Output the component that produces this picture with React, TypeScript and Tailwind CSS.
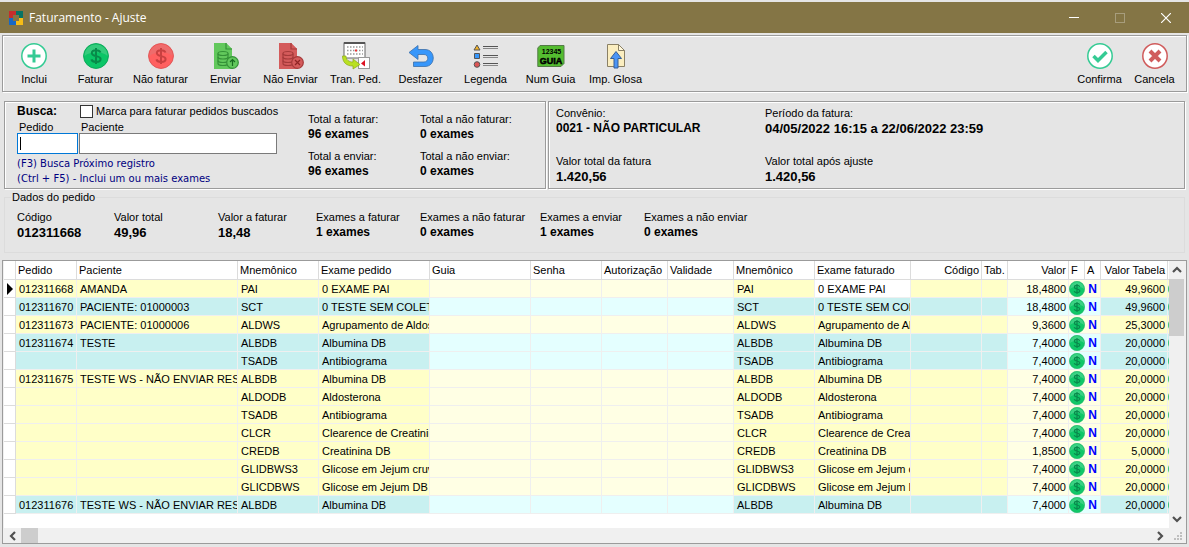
import type { ReactNode } from 'react'
import { clsx } from 'clsx'

function Coin({ light, fill, edge, sign, className }: { light: string; fill: string; edge: string; sign: string; className: string }) {
  return (
    <svg viewBox="0 0 26 26" className={className} aria-hidden="true">
      <circle cx="13" cy="13" r="12.4" fill={fill} stroke={edge} />
      <path d="M1.500 13a11.500 11.500 0 0 1 23 0C19 8 8 8 1.500 13z" fill={light} />
      <path d="M13 5v16M17.500 9.500c-.6-1.600-2.200-2.300-4.400-2.300-2.700 0-4.300 1-4.300 2.800 0 4.200 8.800 2.100 8.800 6 0 1.900-1.800 2.900-4.500 2.900-2.500 0-4.200-.8-4.700-2.500" fill="none" stroke={sign} strokeWidth="2" />
    </svg>
  )
}

function RingIcon({ color, children }: { color: string; children: ReactNode }) {
  return (
    <svg viewBox="0 0 26 26" className="size-[26px]" fill="none" stroke={color}>
      <circle cx="13" cy="13" r="12.2" fill="#fff" strokeWidth="1.5" />
      {children}
    </svg>
  )
}

function FileIcon({ fill, edge, children }: { fill: string; edge: string; children: ReactNode }) {
  return (
    <svg viewBox="0 0 26 28" className="h-7 w-[26px]" fill={fill} stroke={edge} strokeWidth="1.2">
      <path d="M1 1h12l6 6v20H1z" stroke="none" />
      <path d="M13 1v6h6" />
      <path d="M5 11.500v10c0 1 2 2 5 2s5-1 5-2v-10" />
      <ellipse cx="10" cy="11.5" rx="5" ry="2" />
      <path d="M5 15c0 1 2 2 5 2s5-1 5-2M5 18.500c0 1 2 2 5 2s5-1 5-2" fill="none" />
      <circle cx="19.5" cy="20.5" r="5.8" />
      {children}
    </svg>
  )
}

const actions = [
  {
    label: 'Faturar',
    icon: <Coin light="#35cb7c" fill="#0bc566" edge="#0aa657" sign="#078a49" className="size-[26px]" />
  },
  {
    label: 'Não faturar',
    icon: <Coin light="#ee6c6c" fill="#ff6060" edge="#df5555" sign="#c94040" className="size-[26px]" />
  },
  {
    label: 'Enviar',
    icon: (
      <FileIcon fill="#62c85c" edge="#349137">
        <path d="M19.500 24v-6M17 20l2.500-2.500L22 20" fill="none" stroke="#176b20" />
      </FileIcon>
    )
  },
  {
    label: 'Não Enviar',
    icon: (
      <FileIcon fill="#d45b5b" edge="#a53a3a">
        <path d="m17 18 5 5m0-5-5 5" stroke="#8f2424" />
      </FileIcon>
    )
  },
  {
    label: 'Tran. Ped.',
    icon: (
      <svg viewBox="0 0 30 28" className="h-7 w-[30px]" fill="none">
        <rect x="3" y="1" width="21" height="15" fill="#fff" stroke="#666" />
        <path d="M3 1h21" stroke="#555" strokeWidth="2" />
        <path d="M6 5h16M6 8.500h16M6 12h16" stroke="#999" strokeWidth="1.4" strokeDasharray="1.5 1.5" />
        <path d="M14 7.500h2v2h-2z" fill="#e33" />
        <rect x="17.5" y="15.500" width="11" height="11" fill="#fff" stroke="#999" />
        <path d="m20 21.500 4-3.500v6.500z" fill="#d12" />
        <path d="M1.500 14h3.500c0 4 3 6 7 6v-3l7 5.500-7 4.500v-3C5 24 1.500 20 1.500 14z" fill="#b9e022" stroke="#8ba718" strokeWidth=".7" />
      </svg>
    )
  },
  {
    label: 'Desfazer',
    icon: (
      <svg viewBox="0 0 26 26" className="size-[26px]">
        <path d="M1 9.500 10 2.500v4h7c11 0 11 17 0 17H5.500V19H16c5 0 5-7.500 0-7.500h-6v5z" fill="#3797fb" stroke="#3b6fa8" strokeWidth=".8" />
      </svg>
    )
  },
  {
    label: 'Legenda',
    icon: (
      <svg viewBox="0 0 26 26" className="size-[26px]" stroke="#555">
        <path d="m4 2 3 5H1z" fill="#f2b229" />
        <path d="M1.500 10.500h5v5h-5z" fill="#3797fb" />
        <circle cx="4" cy="21.5" r="2.8" fill="#dc5555" />
        <path d="M10 3.500h15M10 12.500h15M10 20.500h15" stroke="#555" />
        <path d="M10 5.500h15M10 14.500h15M10 22.500h15" stroke="#888" />
      </svg>
    )
  },
  {
    label: 'Num Guia',
    icon: (
      <svg viewBox="0 0 28 24" className="h-6 w-7">
        <path d="M3 1.500h24v18l-3 3H.8V4z" fill="#54bc30" stroke="#557b48" />
        <text x="14.5" y="9.500" textAnchor="middle" className="font-['Liberation_Sans'] text-[7px] font-bold">12345</text>
        <text x="14" y="19.500" textAnchor="middle" className="font-['Liberation_Sans'] text-[9px] font-bold" stroke="#000" strokeWidth=".5">GUIA</text>
      </svg>
    )
  },
  {
    label: 'Imp. Glosa',
    icon: (
      <svg viewBox="0 0 20 26" className="h-[26px] w-5">
        <path d="M1.500 1.500h11l6 6v16h-17z" fill="#fbeec0" stroke="#8a8065" />
        <path d="M12.500 1.500v6h6z" fill="#fff8dc" stroke="#8a8065" />
        <path d="m10 8.500 5.500 7H12v9.500H8v-9.500H4.500z" fill="#4c95f5" stroke="#365f96" />
      </svg>
    )
  }
]

const orderTotals = [
  { label: 'Código', value: '012311668', width: 'w-[97px]', numeric: true },
  { label: 'Valor total', value: '49,96', width: 'w-[104px]', numeric: true },
  { label: 'Valor a faturar', value: '18,48', width: 'w-[98px]', numeric: true },
  { label: 'Exames a faturar', value: '1 exames', width: 'w-[104px]' },
  { label: 'Exames a não faturar', value: '0 exames', width: 'w-[120px]' },
  { label: 'Exames a enviar', value: '1 exames', width: 'w-[104px]' },
  { label: 'Exames a não enviar', value: '0 exames', width: 'w-[120px]' }
]

const columns = [
  { title: '', width: 'w-3' },
  { title: 'Pedido', width: 'w-[61px]' },
  { title: 'Paciente', width: 'w-[161px]' },
  { title: 'Mnemônico', width: 'w-[81px]' },
  { title: 'Exame pedido', width: 'w-[111px]' },
  { title: 'Guia', width: 'w-[101px]' },
  { title: 'Senha', width: 'w-[71px]' },
  { title: 'Autorização', width: 'w-[66px]' },
  { title: 'Validade', width: 'w-[66px]' },
  { title: 'Mnemônico', width: 'w-[81px]' },
  { title: 'Exame faturado', width: 'w-24' },
  { title: 'Código', width: 'w-[71px]', right: true },
  { title: 'Tab.', width: 'w-[26px]' },
  { title: 'Valor', width: 'w-[61px]', right: true },
  { title: 'F', width: 'w-4' },
  { title: 'A', width: 'w-4' },
  { title: 'Valor Tabela', width: 'w-[67px]', right: true },
  { title: '', width: 'w-4' }
]

const rows = [
  { order: '012311668', patient: 'AMANDA', code: 'PAI', exam: '0 EXAME PAI', value: '18,4800', table: '49,9600', blue: false },
  { order: '012311670', patient: 'PACIENTE: 01000003', code: 'SCT', exam: '0 TESTE SEM COLETA', value: '18,4800', table: '49,9600', blue: true },
  { order: '012311673', patient: 'PACIENTE: 01000006', code: 'ALDWS', exam: 'Agrupamento de Aldosterona', value: '9,3600', table: '25,3000', blue: false },
  { order: '012311674', patient: 'TESTE', code: 'ALBDB', exam: 'Albumina DB', value: '7,4000', table: '20,0000', blue: true },
  { order: '', patient: '', code: 'TSADB', exam: 'Antibiograma', value: '7,4000', table: '20,0000', blue: true },
  { order: '012311675', patient: 'TESTE WS - NÃO ENVIAR RES', code: 'ALBDB', exam: 'Albumina DB', value: '7,4000', table: '20,0000', blue: false },
  { order: '', patient: '', code: 'ALDODB', exam: 'Aldosterona', value: '7,4000', table: '20,0000', blue: false },
  { order: '', patient: '', code: 'TSADB', exam: 'Antibiograma', value: '7,4000', table: '20,0000', blue: false },
  { order: '', patient: '', code: 'CLCR', exam: 'Clearence de Creatinina', value: '7,4000', table: '20,0000', blue: false },
  { order: '', patient: '', code: 'CREDB', exam: 'Creatinina DB', value: '1,8500', table: '5,0000', blue: false },
  { order: '', patient: '', code: 'GLIDBWS3', exam: 'Glicose em Jejum cruva', value: '7,4000', table: '20,0000', blue: false },
  { order: '', patient: '', code: 'GLICDBWS', exam: 'Glicose em Jejum DB', value: '7,4000', table: '20,0000', blue: false },
  { order: '012311676', patient: 'TESTE WS - NÃO ENVIAR RES', code: 'ALBDB', exam: 'Albumina DB', value: '7,4000', table: '20,0000', blue: true }
]

function ToolButton({ label, className, children }: { label: string; className: string; children: ReactNode }) {
  return (
    <button type="button" className={clsx('flex shrink-0 flex-col items-center whitespace-nowrap', className)}>
      <span className="flex h-7 items-center justify-center">{children}</span>
      <span className="mt-[3px] leading-3">{label}</span>
    </button>
  )
}

function Info({ label, value, numeric, className }: { label: string; value: string; numeric?: boolean; className?: string }) {
  return (
    <div className={clsx('whitespace-nowrap', className)}>
      <div className="leading-4">{label}</div>
      <div className={clsx('leading-[15px] font-bold', numeric ? 'text-[13px]' : 'text-xs')}>{value}</div>
    </div>
  )
}

function Cell({ tone, right, children }: { tone: string; right?: boolean; children?: ReactNode }) {
  return (
    <td className={clsx('h-[18px] overflow-hidden border-r border-b border-[#efefef] p-0 whitespace-nowrap leading-4', right ? 'pr-0.5 text-right' : 'pl-[3px]', tone)}>
      {children}
    </td>
  )
}

function CoinCell({ tone }: { tone: string }) {
  return (
    <td className={clsx('h-[18px] border-b border-[#efefef] p-0', tone)}>
      <Coin light="#3bd283" fill="#10c768" edge="#25b56b" sign="#088a4c" className="size-4" />
    </td>
  )
}

function ExamRow({ row, active }: { row: (typeof rows)[number]; active: boolean }) {
  const strong = row.blue ? 'bg-[#c8f0f0]' : 'bg-[#ffffc8]'
  const pale = row.blue ? 'bg-[#e4ffff]' : 'bg-[#ffffe4]'

  return (
    <tr>
      <td className="h-[18px] border-r border-b border-[#dcdcdc] bg-white p-0">
        {active && (
          <svg viewBox="0 0 6 12" className="ml-[3px] h-3 w-1.5">
            <path d="M0 0l6 6-6 6z" />
          </svg>
        )}
      </td>
      <Cell tone={strong}>{row.order}</Cell>
      <Cell tone={strong}>{row.patient}</Cell>
      <Cell tone={strong}>{row.code}</Cell>
      <Cell tone={strong}>{row.exam}</Cell>
      <Cell tone={pale} />
      <Cell tone={pale} />
      <Cell tone={pale} />
      <Cell tone={pale} />
      <Cell tone={strong}>{row.code}</Cell>
      <Cell tone={active ? 'bg-white' : strong}>{row.exam}</Cell>
      <Cell tone={strong} />
      <Cell tone={strong} />
      <Cell tone={pale} right>{row.value}</Cell>
      <CoinCell tone={pale} />
      <td className={clsx('h-[18px] border-r border-b border-[#efefef] p-0 text-center text-xs leading-4 font-bold text-[#0000ff]', pale)}>N</td>
      <Cell tone={strong} right>{row.table}</Cell>
      <CoinCell tone={strong} />
    </tr>
  )
}

function ScrollButton({ label, path, className }: { label: string; path: string; className: string }) {
  return (
    <button type="button" aria-label={label} className={clsx('flex items-center justify-center', className)}>
      <svg viewBox="0 0 10 10" className="size-2.5" fill="none" stroke="#505050" strokeWidth="2.2">
        <path d={path} />
      </svg>
    </button>
  )
}

export default function App() {
  return (
    <div className="flex min-h-screen flex-col bg-[#e5e5e5] pt-0.5 font-['Liberation_Sans',Arial,sans-serif] text-[11px] text-black">
      <header className="flex h-[31px] items-center bg-[#847545] pl-2 text-white">
        <svg viewBox="0 0 16 16" className="size-4">
          <path d="M1 1h7v4H5v3H1z" fill="#c72c2c" />
          <path d="M8 1h7v7h-4V5H8z" fill="#087365" />
          <path d="M15 8v7H8v-4h3V8z" fill="#f6bd16" />
          <path d="M8 15H1V8h4v3h3z" fill="#1768c4" />
        </svg>
        <h1 className="ml-[5px] flex-1 font-['Open_Sans',sans-serif] text-xs">Faturamento - Ajuste</h1>
        <button type="button" aria-label="Minimizar" className="flex w-[46px] justify-center">
          <span className="h-px w-2.5 bg-white" />
        </button>
        <button type="button" aria-label="Maximizar" disabled className="flex w-[46px] justify-center">
          <span className="size-2.5 border border-[#a79d7c]" />
        </button>
        <button type="button" aria-label="Fechar" className="flex w-[46px] justify-center">
          <svg viewBox="0 0 10 10" className="size-2.5" stroke="#fff" strokeWidth="1.2"><path d="m0 0 10 10M10 0 0 10" /></svg>
        </button>
      </header>

      <div className="mx-0.5 mt-0.5 flex h-[57px] shrink-0 border border-[#9b9b9b] pt-1.5 shadow-[inset_1px_1px_0_#fff,1px_1px_0_#fff]">
        <ToolButton label="Inclui" className="ml-0.5 w-[58px]">
          <RingIcon color="#35cb94"><path d="M13 6.500v13M6.500 13h13" strokeWidth="3" /></RingIcon>
        </ToolButton>
        {actions.map((action) => (
          <ToolButton key={action.label} label={action.label} className="w-[65px]">{action.icon}</ToolButton>
        ))}
        <div className="flex-1" />
        <ToolButton label="Confirma" className="w-[55px]">
          <RingIcon color="#35cb94"><path d="m6.500 13 4.500 4.500 8.500-8.500" strokeWidth="3.5" /></RingIcon>
        </ToolButton>
        <ToolButton label="Cancela" className="mr-1 w-[55px]">
          <RingIcon color="#d05c5c"><path d="m8 8 10 10M18 8 8 18" strokeWidth="4" /></RingIcon>
        </ToolButton>
      </div>

      <div className="mx-1 mt-[9px] flex gap-0.5">
        <section className="flex h-[88px] w-[542px] shrink-0 border border-[#9b9b9b] pl-3 shadow-[inset_1px_1px_0_#fff,1px_1px_0_#fff]">
          <div className="w-[291px] whitespace-nowrap">
            <div className="mt-px flex h-4 items-center">
              <h2 className="w-[63px] text-xs font-bold">Busca:</h2>
              <input id="marca" type="checkbox" className="size-[13px] appearance-none border border-[#333] bg-white" />
              <label htmlFor="marca" className="ml-[3px]">Marca para faturar pedidos buscados</label>
            </div>
            <div className="flex gap-px">
              <div className="relative w-[61px]">
                <label htmlFor="pedido" className="block h-3.5 pl-0.5 leading-4">Pedido</label>
                <input id="pedido" className="block h-[21px] w-full border border-[#0078d7] bg-white px-0.5 outline-none" />
                <span className="absolute bottom-1 left-[3px] h-[13px] w-px bg-black" />
              </div>
              <div className="w-[198px]">
                <label htmlFor="paciente" className="block h-3.5 pl-0.5 leading-4">Paciente</label>
                <input id="paciente" className="block h-[21px] w-full border border-[#7a7a7a] bg-white px-0.5 outline-none" />
              </div>
            </div>
            <div className="mt-0.5 font-['DejaVu_Sans',Verdana,sans-serif] text-[10px] leading-[15px] text-[#000080]">
              <p>(F3) Busca Próximo registro</p>
              <p>(Ctrl + F5) - Inclui um ou mais exames</p>
            </div>
          </div>
          <div className="grid grid-cols-[112px_112px] content-start gap-y-1.5 pt-[9px]">
            <Info label="Total a faturar:" value="96 exames" />
            <Info label="Total a não faturar:" value="0 exames" />
            <Info label="Total a enviar:" value="96 exames" />
            <Info label="Total a não enviar:" value="0 exames" />
          </div>
        </section>

        <section className="grid h-[88px] flex-1 grid-cols-[209px_1fr] content-start gap-y-[17px] border border-[#9b9b9b] pt-[3px] pl-[7px] shadow-[inset_1px_1px_0_#fff,1px_1px_0_#fff]">
          <Info label="Convênio:" value="0021 - NÃO PARTICULAR" />
          <Info label="Período da fatura:" value="04/05/2022 16:15 a 22/06/2022 23:59" numeric />
          <Info label="Valor total da fatura" value="1.420,56" numeric />
          <Info label="Valor total após ajuste" value="1.420,56" numeric />
        </section>
      </div>

      <fieldset className="mx-1 mt-px h-[63px] border border-[#dcdcdc] pl-3">
        <legend className="-ml-1.5 px-px leading-[14px]">Dados do pedido</legend>
        <div className="flex pt-[5px]">
          {orderTotals.map((total) => (
            <Info key={total.label} label={total.label} value={total.value} numeric={total.numeric} className={total.width} />
          ))}
        </div>
      </fieldset>

      <main className="mx-0.5 mt-[7px] mb-[3px] flex flex-1 flex-col border border-[#9b9b9b] bg-[#f0f0f0] pl-px">
        <div className="flex flex-1">
          <div className="min-w-0 flex-1 overflow-hidden bg-white">
            <table className="w-[1180px] table-fixed border-separate border-spacing-0">
              <colgroup>
                {columns.map((column, index) => (
                  <col key={index} className={column.width} />
                ))}
              </colgroup>
              <thead>
                <tr>
                  {columns.map((column, index) => (
                    <th
                      key={index}
                      className={clsx(
                        'h-[19px] overflow-hidden border-r border-b border-[#dcdcdc] p-0 font-normal whitespace-nowrap',
                        column.right ? 'pr-0.5 text-right' : 'pl-0.5 text-left'
                      )}
                    >
                      {column.title}
                    </th>
                  ))}
                </tr>
              </thead>
              <tbody>
                {rows.map((row, index) => (
                  <ExamRow key={index} row={row} active={index === 0} />
                ))}
              </tbody>
            </table>
          </div>
          <div className="flex w-[17px] shrink-0 flex-col">
            <ScrollButton label="Rolar para cima" path="m1 7 4-4 4 4" className="h-[18px] w-[15px]" />
            <div className="h-[57px] w-[15px] bg-[#cdcdcd]" />
            <ScrollButton label="Rolar para baixo" path="m1 3 4 4 4-4" className="mt-auto h-[18px] w-[15px]" />
          </div>
        </div>
        <div className="flex h-[15px] items-center">
          <ScrollButton label="Rolar para a esquerda" path="M7 1 3 5l4 4" className="w-[17px]" />
          <div className="h-[15px] w-[17px] bg-[#cdcdcd]" />
          <ScrollButton label="Rolar para a direita" path="m3 1 4 4-4 4" className="ml-auto w-[17px]" />
          <svg viewBox="0 0 18 15" className="h-[15px] w-[18px]" fill="#bfbfbf">
            <path d="M12 4h2v2h-2zM9 7h2v2H9zM12 7h2v2h-2zM6 10h2v2H6zM9 10h2v2H9zM12 10h2v2h-2z" />
          </svg>
        </div>
      </main>
    </div>
  )
}
